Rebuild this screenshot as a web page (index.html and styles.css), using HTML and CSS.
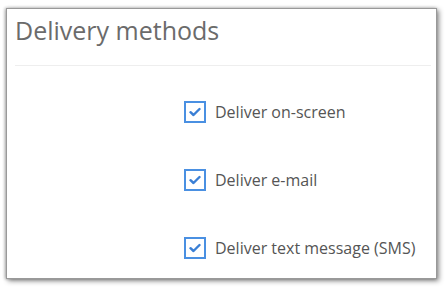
FILE: index.html
```html
<!DOCTYPE html>
<html lang="en">
<head>
  <meta charset="UTF-8">
  <title>Delivery methods</title>
  <link rel="stylesheet" href="styles.css">
</head>
<body>
  <div class="panel">
    <h1>Delivery methods</h1>
    <div class="methods">
      <label class="method">
        <span class="box"><svg viewBox="0 0 12 10" width="12" height="10"><path d="M1.5 5.2 L4.5 8 L10.5 2" fill="none" stroke="#3a7fd5" stroke-width="2.4" stroke-linecap="round" stroke-linejoin="round"/></svg></span>
        Deliver on-screen
      </label>
      <label class="method">
        <span class="box"><svg viewBox="0 0 12 10" width="12" height="10"><path d="M1.5 5.2 L4.5 8 L10.5 2" fill="none" stroke="#3a7fd5" stroke-width="2.4" stroke-linecap="round" stroke-linejoin="round"/></svg></span>
        Deliver e-mail
      </label>
      <label class="method">
        <span class="box"><svg viewBox="0 0 12 10" width="12" height="10"><path d="M1.5 5.2 L4.5 8 L10.5 2" fill="none" stroke="#3a7fd5" stroke-width="2.4" stroke-linecap="round" stroke-linejoin="round"/></svg></span>
        Deliver text message (SMS)
      </label>
    </div>
  </div>
</body>
</html>
```

FILE: styles.css
```css
body {
  margin: 0;
  padding: 8px 9px 9px 6px;
  background: #fff;
  font-family: "Open Sans", sans-serif;
}
.panel {
  background: white;
  border: 1px solid #999;
  box-shadow: 2px 2px 5px rgba(0,0,0,0.45), -1px 0 3px rgba(0,0,0,0.3);
  height: 271px;
  box-sizing: border-box;
}
h1 {
  margin: 0 5px 0 8px;
  padding: 4px 0 18px;
  font-size: 25px;
  font-weight: normal;
  color: #6b6b6b;
  border-bottom: 1px solid #eee;
}
.methods {
  display: flex;
  flex-direction: column;
  gap: 46px;
  padding: 35px 0 0 177px;
}
.method {
  display: flex;
  align-items: center;
  gap: 9px;
  font-size: 16px;
  color: #555;
  height: 22px;
}
.box {
  width: 22px;
  height: 22px;
  box-sizing: border-box;
  border: 2px solid #4a90e2;
  display: flex;
  align-items: center;
  justify-content: center;
}
```
